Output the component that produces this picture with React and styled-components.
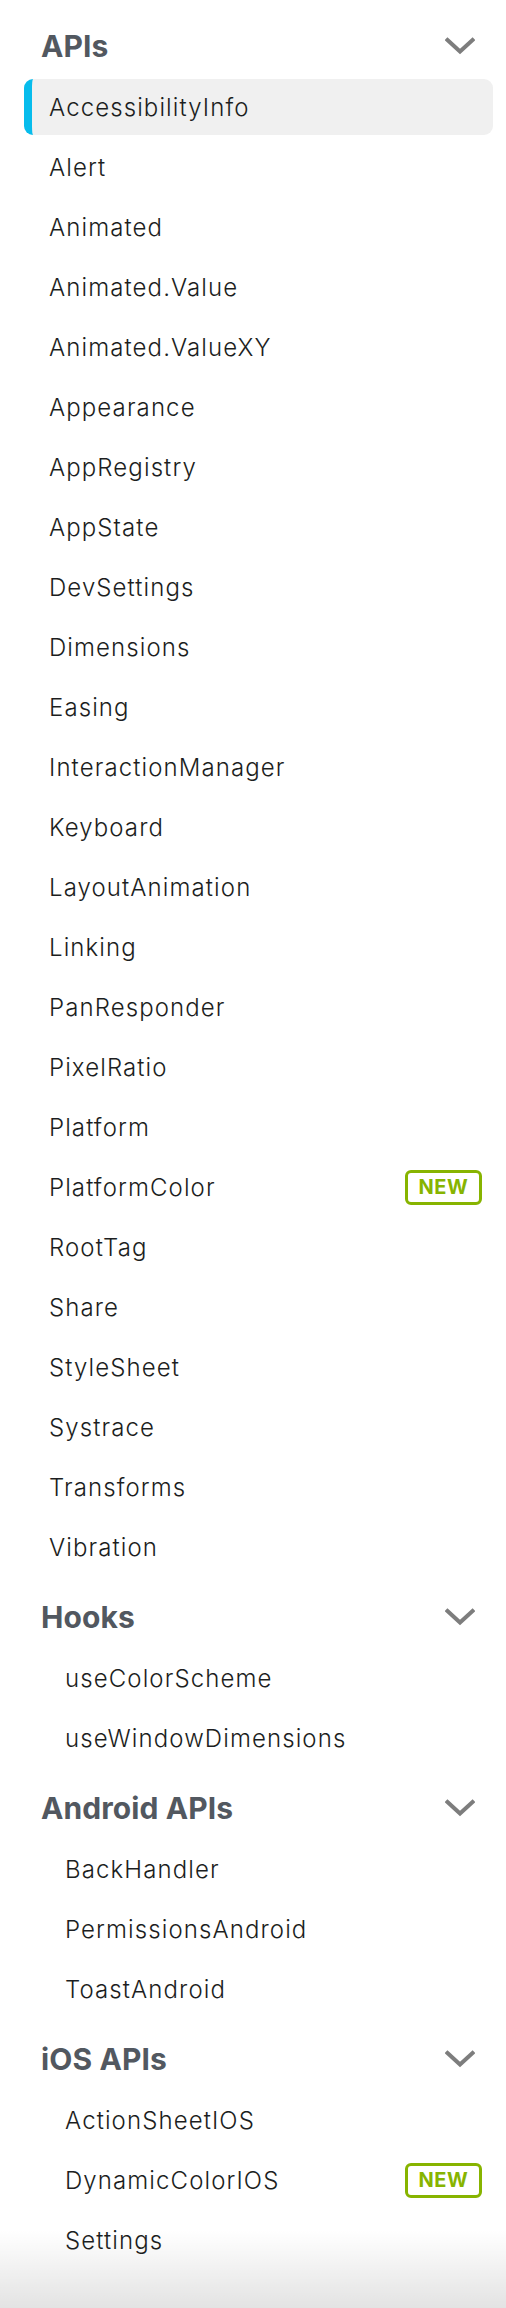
import React from 'react';
import styled, { createGlobalStyle } from 'styled-components';

const GlobalStyle = createGlobalStyle`
  html, body {
    margin: 0;
    padding: 0;
    background: #fff;
  }
  body {
    font-family: Inter, "Open Sans", "Liberation Sans", sans-serif;
    -webkit-font-smoothing: antialiased;
  }
`;

const Sidebar = styled.nav`
  position: relative;
  width: 506px;
  min-height: 2308px;
  box-sizing: border-box;
  padding: 17px 13px 0 24px;
  overflow: hidden;

  &::after {
    content: '';
    position: absolute;
    left: 0;
    right: 0;
    bottom: 0;
    height: 78px;
    background: linear-gradient(to bottom, rgba(0, 0, 0, 0), rgba(0, 0, 0, 0.11));
    pointer-events: none;
  }
`;

const Section = styled.section`
  & + & {
    margin-top: 13px;
  }
`;

const Heading = styled.div`
  height: 58px;
  display: flex;
  align-items: center;
  justify-content: space-between;
  padding: 0 18px 0 17px;
  font-size: 30px;
  font-weight: 700;
  color: #525860;
  letter-spacing: 0.1px;
`;

const List = styled.ul`
  list-style: none;
  margin: 0;
  padding: 0 0 0 ${(p) => (p.$nested ? 16 : 0)}px;
`;

const Item = styled.li`
  margin-top: 4px;
  height: 56px;
  display: flex;
  align-items: center;
  justify-content: space-between;
  box-sizing: border-box;
  padding: 0 11px 0 17px;
  border-left: 8px solid ${(p) => (p.$active ? '#07bcec' : 'transparent')};
  border-radius: 9px;
  background: ${(p) => (p.$active ? '#f0f0f0' : 'transparent')};
  font-size: 24px;
  font-weight: 350;
  letter-spacing: 1.1px;
  color: #1c1e21;
`;

const Badge = styled.span`
  display: inline-flex;
  align-items: center;
  justify-content: center;
  width: 77px;
  height: 35px;
  box-sizing: border-box;
  border: 3px solid #87b400;
  border-radius: 6px;
  color: #87b400;
  font-size: 20px;
  font-weight: 700;
  letter-spacing: 0.6px;
`;

const Chevron = () => (
  <svg width="30" height="18" viewBox="0 0 30 18" fill="none">
    <polyline
      points="2.5,3 15,14.5 27.5,3"
      stroke="#7d7d7d"
      strokeWidth="4"
      strokeLinecap="square"
    />
  </svg>
);

const sections = [
  {
    title: 'APIs',
    nested: false,
    items: [
      'AccessibilityInfo',
      'Alert',
      'Animated',
      'Animated.Value',
      'Animated.ValueXY',
      'Appearance',
      'AppRegistry',
      'AppState',
      'DevSettings',
      'Dimensions',
      'Easing',
      'InteractionManager',
      'Keyboard',
      'LayoutAnimation',
      'Linking',
      'PanResponder',
      'PixelRatio',
      'Platform',
      'PlatformColor',
      'RootTag',
      'Share',
      'StyleSheet',
      'Systrace',
      'Transforms',
      'Vibration',
    ],
  },
  { title: 'Hooks', nested: true, items: ['useColorScheme', 'useWindowDimensions'] },
  {
    title: 'Android APIs',
    nested: true,
    items: ['BackHandler', 'PermissionsAndroid', 'ToastAndroid'],
  },
  { title: 'iOS APIs', nested: true, items: ['ActionSheetIOS', 'DynamicColorIOS', 'Settings'] },
];

const fresh = ['PlatformColor', 'DynamicColorIOS'];

const App = () => {
  return (
    <>
      <GlobalStyle />
      <Sidebar>
        {sections.map((s) => (
          <Section key={s.title}>
            <Heading>
              {s.title}
              <Chevron />
            </Heading>
            <List $nested={s.nested}>
              {s.items.map((name) => (
                <Item key={name} $active={name === 'AccessibilityInfo'}>
                  {name}
                  {fresh.includes(name) && <Badge>NEW</Badge>}
                </Item>
              ))}
            </List>
          </Section>
        ))}
      </Sidebar>
    </>
  );
};

export default App;
